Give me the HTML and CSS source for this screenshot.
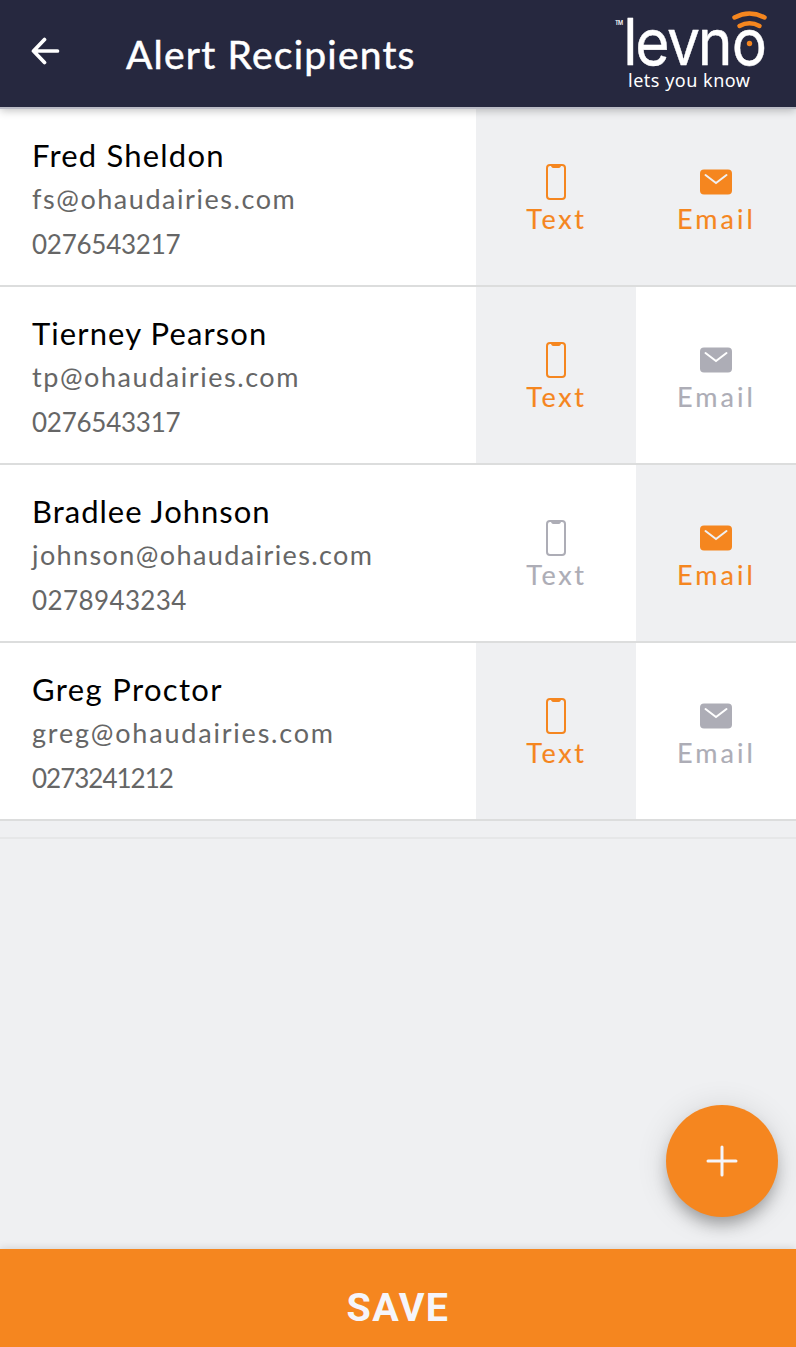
FILE: index.html
```html
<!DOCTYPE html>
<html lang="en">
<head>
<meta charset="utf-8">
<title>Alert Recipients</title>
<link rel="stylesheet" href="styles.css">
</head>
<body>
<svg width="0" height="0" class="defs" aria-hidden="true">
  <symbol id="phone" viewBox="0 0 20 36">
    <rect x="1" y="1" width="18" height="34" rx="3" fill="none" stroke="currentColor" stroke-width="2"/>
    <path d="M4.500 1H15.500L14.500 3Q14 4 12.500 4H7.500Q6 4 5.500 3Z" fill="currentColor"/>
  </symbol>
  <symbol id="mail" viewBox="0 0 32 26">
    <rect x="0" y="0.500" width="32" height="25" rx="4" fill="currentColor"/>
    <path d="M5.500 6L16 14L26.500 6" fill="none" stroke="var(--cut)" stroke-width="2" stroke-linecap="round"/>
  </symbol>
</svg>
<div class="screen">
  <header class="bar">
    <svg class="back" viewBox="0 0 30 28" width="30" height="28"><path d="M14.500 2.500L3.500 14L14.500 25.500M3.500 14H27.500" fill="none" stroke="#fff" stroke-width="3.700" stroke-linecap="round" stroke-linejoin="round"/></svg>
    <h1 class="title">Alert Recipients</h1>
    <svg class="logo" viewBox="610 0 170 107" width="170" height="107">
      <text class="tm" x="615" y="24.500" textLength="8">TM</text>
      <g transform="scale(.92 1)"><text class="word" y="65" x="677.500 690.500 725 758.500 795.500">levno</text></g>
      <text class="tag" x="628" y="87" textLength="122">lets you know</text>
      <circle cx="749.500" cy="43.500" r="2.700" fill="#f5861f"/>
      <g fill="none" stroke="#f5861f" stroke-width="4.500" stroke-linecap="round"><path d="M734.500 17.500Q749.500 9.500 764.500 17.500"/><path d="M739.500 26Q749.500 20.500 759.500 26"/></g>
    </svg>
  </header>
  <main class="list">
    <section class="row">
      <div class="person"><div class="name n1">Fred Sheldon</div><div class="mail m1">fs@ohaudairies.com</div><div class="tel">0276543217</div></div>
      <div class="opt on"><svg class="phone"><use href="#phone"/></svg><span class="label">Text</span></div>
      <div class="opt on"><svg class="env"><use href="#mail"/></svg><span class="label em">Email</span></div>
    </section>
    <section class="row">
      <div class="person"><div class="name n2">Tierney Pearson</div><div class="mail m2">tp@ohaudairies.com</div><div class="tel">0276543317</div></div>
      <div class="opt on"><svg class="phone"><use href="#phone"/></svg><span class="label">Text</span></div>
      <div class="opt"><svg class="env"><use href="#mail"/></svg><span class="label em">Email</span></div>
    </section>
    <section class="row">
      <div class="person"><div class="name n3">Bradlee Johnson</div><div class="mail m3">johnson@ohaudairies.com</div><div class="tel t3">0278943234</div></div>
      <div class="opt"><svg class="phone"><use href="#phone"/></svg><span class="label">Text</span></div>
      <div class="opt on"><svg class="env"><use href="#mail"/></svg><span class="label em">Email</span></div>
    </section>
    <section class="row">
      <div class="person"><div class="name n4">Greg Proctor</div><div class="mail m4">greg@ohaudairies.com</div><div class="tel t4">0273241212</div></div>
      <div class="opt on"><svg class="phone"><use href="#phone"/></svg><span class="label">Text</span></div>
      <div class="opt"><svg class="env"><use href="#mail"/></svg><span class="label em">Email</span></div>
    </section>
    <div class="end"></div>
  </main>
  <button class="fab" aria-label="Add"><svg viewBox="0 0 32 32" width="32" height="32"><path d="M16 2V30M2 16H30" stroke="#f5f5fa" stroke-width="3" stroke-linecap="round"/></svg></button>
  <button class="save">SAVE</button>
</div>
</body>
</html>
```
FILE: styles.css
```css
* { box-sizing: border-box; }
body { margin: 0; font-family: Lato, sans-serif; background: #eff0f2; }
.defs { position: absolute; }
.screen { position: relative; display: flex; flex-direction: column; width: 796px; height: 1347px; overflow: hidden; }
.bar { position: relative; z-index: 1; display: flex; align-items: flex-start; height: 109px; flex: none; background: #26283f; border-bottom: 2px solid #bbbcc6; box-shadow: 0 1px 9px rgba(0,0,0,.28); }
.back { margin: 37px 0 0 30px; }
.title { margin: 30px 0 0 66px; width: 420px; color: #fff; font-size: 39px; line-height: 48px; font-weight: 400; letter-spacing: 1.22px; -webkit-text-stroke: .5px #fff; white-space: nowrap; }
.logo { margin-left: 64px; flex: none; }
.logo text { fill: #fff; }
.tm { font: 600 5.500px Inter, sans-serif; }
.word { font: 400 64px Inter, sans-serif; stroke: #fff; stroke-width: .4px; stroke-linejoin: round; }
.tag { font: 400 18px "Noto Sans", sans-serif; }
.list { flex: 1; }
.row { display: flex; height: 178px; border-bottom: 2px solid #dcdddd; background: #fff; }
.person { width: 476px; padding: 29px 0 0 32px; white-space: nowrap; }
.name { height: 34px; line-height: 34px; font-size: 31px; color: #000; letter-spacing: 1.2px; }
.n2 { letter-spacing: 1.1px; }
.n3 { letter-spacing: 1px; }
.n4 { letter-spacing: 1.35px; }
.mail, .tel { height: 44px; line-height: 44px; color: #666; }
.mail { margin-top: 5px; font-size: 27px; letter-spacing: 1.55px; }
.m3 { letter-spacing: 1.4px; }
.m4 { letter-spacing: 1.8px; }
.tel { margin-top: 1px; font-size: 26px; letter-spacing: -.25px; }
.t3 { letter-spacing: .4px; }
.t4 { letter-spacing: -1px; }
.opt { --cut: #fff; display: flex; flex-direction: column; align-items: center; width: 160px; padding-top: 55px; color: #adadb6; }
.opt.on { --cut: #eff0f2; background: #eff0f2; color: #f5861f; }
.phone { width: 20px; height: 36px; }
.env { width: 32px; height: 26px; margin: 5px 0; }
.label { font-size: 27px; line-height: 37px; letter-spacing: 2.6px; margin-right: -1px; -webkit-text-stroke: .15px currentColor; }
.em { letter-spacing: 3.1px; }
.end { height: 18px; border-bottom: 2px solid #e6e7e8; }
.fab { position: absolute; left: 666px; top: 1105px; width: 112px; height: 112px; border: 0; border-radius: 50%; background: #f5861f; display: grid; place-items: center; padding: 0; box-shadow: 0 10px 16px -3px rgba(0,0,0,.3), 0 3px 32px rgba(0,0,0,.12); }
.save { height: 98px; border: 0; padding: 18px 0 0; background: #f5861f; color: #f5f5fa; font: 700 39.500px Roboto, sans-serif; letter-spacing: 1.4px; box-shadow: 0 -1px 8px rgba(0,0,0,.12); }
```
